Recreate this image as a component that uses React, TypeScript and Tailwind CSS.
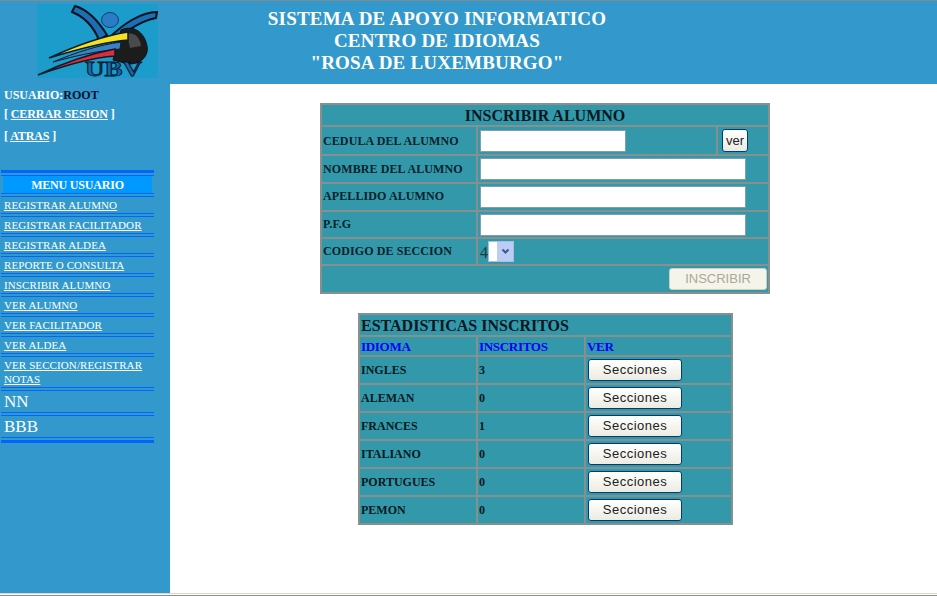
const serif = "font-['Liberation_Serif',serif]";

function Logo() {
  return (
    <svg width="121" height="74" viewBox="0 0 121 74" className="block overflow-visible">
      <rect width="121" height="74" fill="#1b9ccb" />
      <path d="M38 2 C52 6 62 18 70 31 L62 36 C57 24 48 13 35 8 Z" fill="#1d6fb4" stroke="#06121e" strokeWidth="2" />
      <path d="M120 8 C104 8 86 20 72 34 L78 38 C90 26 104 17 119 14 Z" fill="#1d6fb4" stroke="#06121e" strokeWidth="2" />
      <ellipse cx="73" cy="16" rx="8.5" ry="7.5" fill="#2a7cc4" stroke="#0b3f70" strokeWidth="1" />
      <path d="M84 26 C98 20 108 30 110 42 C112 52 104 60 92 60 L76 56 Z" fill="#1c1c1c" stroke="#06121e" strokeWidth="1" />
      <path d="M90 30 C98 28 103 34 104 42 L93 44 Z" fill="#4a4a4a" />
      <path d="M12 54 C38 42 66 32 91 28 L91 36 C66 38 38 46 12 54 Z" fill="#f5e11e" stroke="#0c1c2a" strokeWidth="1.5" />
      <path d="M16 58 C40 48 62 41 84 38 L83 45 C60 47 38 52 16 58 Z" fill="#3a82c4" stroke="#0c1c2a" strokeWidth="1" />
      <path d="M1 71 C26 59 52 50 78 45 L78 52 C52 54 26 62 1 71 Z" fill="#e02c36" stroke="#0c1c2a" strokeWidth="1.5" />
      <text x="48" y="72" fontFamily="Liberation Serif" fontWeight="700" fontSize="20" fill="#1768ad" stroke="#05121f" strokeWidth="0.8" textLength="57" lengthAdjust="spacingAndGlyphs">UBV</text>
    </svg>
  );
}

function MenuItem({ label, big }: { label: string; big?: boolean }) {
  return big ? (
    <div className="mt-[2px] border-y border-[#0066ff] h-[23px] px-[3px] text-[17px] leading-[21px] text-white">{label}</div>
  ) : (
    <div className="mt-[2px] border-y border-[#0066ff] px-[3px] py-[1px] text-[11px] leading-[14px] tracking-[0.1px] text-white underline">{label}</div>
  );
}

function Btn({ label }: { label: string }) {
  return (
    <button className="block w-[94px] h-[22px] rounded-[3px] border border-[#003c74] bg-gradient-to-b from-white to-[#ecebe2] font-['Liberation_Sans',sans-serif] text-[13px] font-normal tracking-[0.5px] text-[#222]">
      {label}
    </button>
  );
}

const cell = "border-2 border-[#85908f] p-0 px-[1px]";
const field = "block h-[22px] ml-[1px] bg-white border border-[#7f9db9]";
const label = " text-[12px] leading-[16px] tracking-[0.1px] font-bold text-[#06222a]";
const labelUp = label + " pb-[2px]";

function Row({ text, w, h, up }: { text: string; w: string; h: string; up?: boolean }) {
  return (
    <tr className={h}>
      <td className={cell + (up ? labelUp : label)}>{text}</td>
      <td className={cell} colSpan={2}>
        <div className={field + " " + w} />
      </td>
    </tr>
  );
}

const rows = [
  ["INGLES", "3"],
  ["ALEMAN", "0"],
  ["FRANCES", "1"],
  ["ITALIANO", "0"],
  ["PORTUGUES", "0"],
  ["PEMON", "0"],
];

export default function App() {
  return (
    <div className={serif + " h-[596px] w-[937px] overflow-hidden bg-white flex flex-col"}>
      <header className="h-[84px] shrink-0 border-t border-[#7f8a8e] bg-[#3399cc] flex">
        <div className="w-[170px] shrink-0 pt-[3px] pl-[37px]">
          <Logo />
        </div>
        <div className="w-[534px] pt-[7px] text-center text-[19px] font-bold leading-[22px] tracking-[0.2px] text-white">
          <div>SISTEMA DE APOYO INFORMATICO</div>
          <div>CENTRO DE IDIOMAS</div>
          <div>"ROSA DE LUXEMBURGO"</div>
        </div>
      </header>

      <div className="h-[509px] flex shrink-0">
        <aside className="w-[170px] shrink-0 bg-[#3399cc] pt-[3px] text-white">
          <div className="px-[4px] text-[12px] font-bold leading-[16px]">
            USUARIO:<span className="text-[#04122e]">ROOT</span>
          </div>
          <div className="px-[4px] mt-[3px] text-[12px] font-bold leading-[16px] tracking-[-0.1px]">
            [ <span className="underline">CERRAR SESION</span> ]
          </div>
          <div className="px-[4px] mt-[6px] text-[12px] font-bold leading-[16px] tracking-[-0.1px]">
            [ <span className="underline">ATRAS</span> ]
          </div>
          <div className="ml-[1px] mt-[26px] w-[153px]">
            <div className="h-[3px] bg-[#0066ff]" />
            <div className="mt-[2px] h-px bg-[#0066ff]" />
            <div className="mx-[2px] h-[17px] bg-[#0099ff] text-center text-[12px] font-bold leading-[18px] tracking-[-0.2px]">MENU USUARIO</div>
            <div className="h-px bg-[#0066ff]" />
            <MenuItem label="REGISTRAR ALUMNO" />
            <MenuItem label="REGISTRAR FACILITADOR" />
            <MenuItem label="REGISTRAR ALDEA" />
            <MenuItem label="REPORTE O CONSULTA" />
            <MenuItem label="INSCRIBIR ALUMNO" />
            <MenuItem label="VER ALUMNO" />
            <MenuItem label="VER FACILITADOR" />
            <MenuItem label="VER ALDEA" />
            <MenuItem label="VER SECCION/REGISTRAR NOTAS" />
            <MenuItem label="NN" big />
            <MenuItem label="BBB" big />
            <div className="mt-[2px] h-[3px] bg-[#0066ff]" />
          </div>
        </aside>

        <main className="flex-1 flex flex-col items-start pt-[19px] pl-[150px]">
          <table className="w-[448px] table-fixed border-collapse bg-[#3399aa]">
            <colgroup>
              <col className="w-[156px]" />
              <col className="w-[240px]" />
              <col className="w-[52px]" />
            </colgroup>
            <tbody>
              <tr className="h-[22px]">
                <td colSpan={3} className={cell + " pt-[2px] text-center text-[16px] leading-[18px] font-bold text-[#06181e]"}>INSCRIBIR ALUMNO</td>
              </tr>
              <tr className="h-[29px]">
                <td className={cell + label}>CEDULA DEL ALUMNO</td>
                <td className={cell}>
                  <div className={field + " w-[146px]"} />
                </td>
                <td className={cell}>
                  <button className="block h-[23px] w-[26px] ml-[3px] rounded-[3px] border border-[#003c74] bg-gradient-to-b from-white to-[#ecebe2] font-['Liberation_Sans',sans-serif] text-[13px] text-[#222]">ver</button>
                </td>
              </tr>
              <Row text="NOMBRE DEL ALUMNO" w="w-[266px]" h="h-[28px]" />
              <Row text="APELLIDO ALUMNO" w="w-[266px]" h="h-[28px]" up />
              <Row text="P.F.G" w="w-[266px]" h="h-[27px]" up />
              <tr className="h-[27px]">
                <td className={cell + labelUp}>CODIGO DE SECCION</td>
                <td className={cell} colSpan={2}>
                  <div className="flex items-center ml-[1px]">
                    <span className="w-[8px] text-[16px] leading-[20px] text-[#20383f] mt-[2px]">4</span>
                    <div className="flex h-[21px] w-[26px] border border-[#a9bddc] bg-white justify-end">
                      <div className="flex w-[16px] items-center justify-center bg-[#bccdf5]">
                        <svg width="9" height="7" viewBox="0 0 9 7"><path d="M1.5 1.5 L4.5 4.5 L7.5 1.5" fill="none" stroke="#3c5a8c" strokeWidth="2" /></svg>
                      </div>
                    </div>
                  </div>
                </td>
              </tr>
              <tr className="h-[28px]">
                <td className={cell} colSpan={3}>
                  <div className="flex justify-end">
                    <button disabled className="block h-[22px] w-[98px] rounded-[3px] border border-[#cfcdbf] bg-[#f5f4ea] font-['Liberation_Sans',sans-serif] text-[13px] text-[#aca899]">INSCRIBIR</button>
                  </div>
                </td>
              </tr>
            </tbody>
          </table>

          <table className="mt-[19px] ml-[38px] w-[373px] table-fixed border-collapse bg-[#3399aa]">
            <colgroup>
              <col className="w-[118px]" />
              <col className="w-[108px]" />
              <col className="w-[147px]" />
            </colgroup>
            <tbody>
              <tr className="h-[22px]">
                <td colSpan={3} className={cell + " pt-[2px] text-[16px] leading-[18px] font-bold text-[#06181e]"}>ESTADISTICAS INSCRITOS</td>
              </tr>
              <tr className="h-[20px] text-[13px] leading-[16px] tracking-[-0.3px] font-bold text-[#0000ff]">
                <td className={cell + " pt-[2px]"}>IDIOMA</td>
                <td className={cell + " pt-[2px]"}>INSCRITOS</td>
                <td className={cell + " pt-[2px]"}>VER</td>
              </tr>
              {rows.map(([name, n]) => (
                <tr key={name} className="h-[28px] text-[12px] leading-[16px] font-bold text-[#06181e]">
                  <td className={cell + " pb-[1px]"}>{name}</td>
                  <td className={cell + " pb-[1px]"}>{n}</td>
                  <td className={cell + " pl-[2px]"}>
                    <Btn label="Secciones" />
                  </td>
                </tr>
              ))}
            </tbody>
          </table>
        </main>
      </div>
      <div className="flex-1 border-t border-[#d9d9d2] bg-white"><div className="mt-px h-[1px] bg-[#8e8e82]" /></div>
    </div>
  );
}
